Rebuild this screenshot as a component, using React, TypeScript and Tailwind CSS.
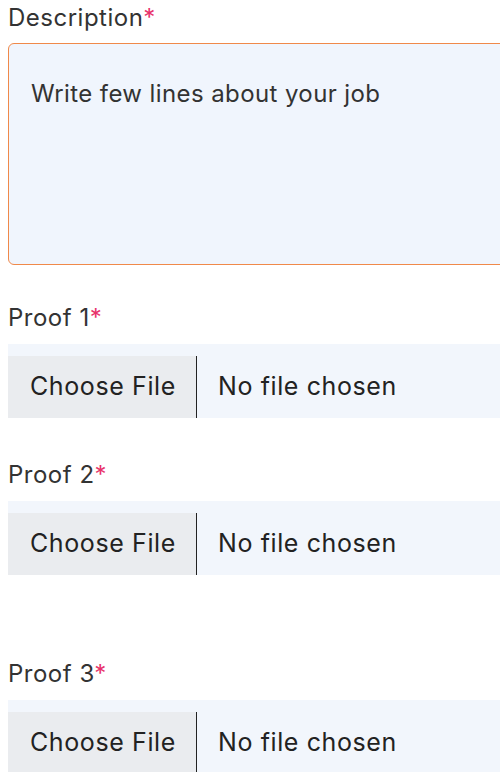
import React from 'react';

const FileField: React.FC<{ label: string; className?: string }> = ({ label, className = '' }) => (
  <div className={className}>
    <label className="block h-9 text-[24px] leading-9 tracking-[0.5px] text-[#333] font-['Inter',sans-serif]">
      {label}
      <span className="text-[#e8336b]">*</span>
    </label>
    <div className="mt-2 flex h-[74px] w-[520px] items-end bg-[#f2f6fc] font-['Inter',sans-serif] text-[25px] tracking-[0.6px] text-[#222]">
      <div className="flex h-[62px] w-[189px] items-center border-r border-[#222] bg-[#eaecef] pl-[22px]">
        Choose File
      </div>
      <div className="flex h-[62px] items-center pl-[21px]">No file chosen</div>
    </div>
  </div>
);

export default function App() {
  return (
    <div className="h-[772px] w-[500px] overflow-hidden bg-white pl-2">
      <label className="block h-9 text-[24px] leading-9 tracking-[0.5px] text-[#333] font-['Inter',sans-serif]">
        Description<span className="text-[#e8336b]">*</span>
      </label>
      <textarea
        readOnly
        placeholder="Write few lines about your job"
        className="mt-[7px] block h-[222px] w-[520px] resize-none rounded-md border border-[#f0894a] bg-[#f0f5fd] pl-[22px] pt-8 text-[24px] leading-9 tracking-[0.4px] text-[#333] outline-none placeholder:text-[#333] font-['Inter',sans-serif]"
      />
      <FileField label="Proof 1" className="mt-[35px]" />
      <FileField label="Proof 2" className="mt-[39px]" />
      <FileField label="Proof 3" className="mt-[81px]" />
    </div>
  );
}
